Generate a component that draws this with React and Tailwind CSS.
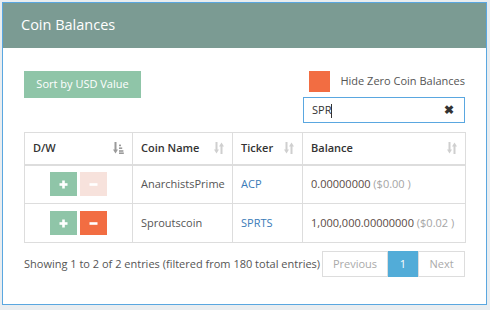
import React from "react";

const SortBoth = () => (
  <svg width="10" height="12" viewBox="0 0 10 12" fill="#cfcfcf">
    <rect x="1.5" y="0" width="2" height="8" />
    <path d="M0 7.5 L5 7.5 L2.5 11.5 Z" />
    <rect x="6.5" y="4" width="2" height="8" />
    <path d="M5 4.5 L10 4.5 L7.5 0.5 Z" />
  </svg>
);

const SortAsc = () => (
  <svg width="11" height="12" viewBox="0 0 11 12" fill="#9a9a9a">
    <rect x="1.5" y="0" width="2" height="8" />
    <path d="M0 7.5 L5 7.5 L2.5 11.5 Z" />
    <rect x="6" y="2.6" width="2" height="1.6" />
    <rect x="6" y="5.4" width="3.2" height="1.6" />
    <rect x="6" y="8.2" width="4.4" height="1.6" />
    <rect x="6" y="10.4" width="4.8" height="1.6" />
  </svg>
);

const Plus = () => (
  <svg width="9" height="9" viewBox="0 0 9 9" fill="white">
    <rect x="3.2" y="0.5" width="2.6" height="8" />
    <rect x="0.5" y="3.2" width="8" height="2.6" />
  </svg>
);
const Minus = () => (
  <svg width="9" height="9" viewBox="0 0 9 9" fill="white">
    <rect x="0.5" y="3.2" width="8" height="2.6" />
  </svg>
);

function Row({ name, ticker, bal, usd, faded }) {
  return (
    <tr className="h-[39px]">
      <td className="border border-[#dddddd] p-0">
        <div className="flex justify-center gap-[3px]">
          <div className="w-[27px] h-[24px] bg-[#8fc5a8] flex items-center justify-center"><Plus /></div>
          <div className={"w-[27px] h-[24px] flex items-center justify-center " + (faded ? "bg-[#f7e2dc]" : "bg-[#f26d42]")}><Minus /></div>
        </div>
      </td>
      <td className="border border-[#dddddd] pl-[8px] text-[#555555] whitespace-nowrap">{name}</td>
      <td className="border border-[#dddddd] pl-[8px] text-[#3a7bb8] whitespace-nowrap">{ticker}</td>
      <td className="border border-[#dddddd] pl-[8px] text-[#5a4a45] whitespace-nowrap">
        {bal} <span className="text-[#a5a5a5]">({usd} )</span>
      </td>
    </tr>
  );
}

export default function App() {
  return (
    <div className="w-[490px] h-[310px] bg-[#e9edf0] pt-[2px] pl-[2px] overflow-hidden" style={{ fontFamily: '"Open Sans", sans-serif' }}>
      <div className="w-[485px] h-[303px] border border-[#5aa7e0] bg-white">
        <div className="h-[45px] bg-[#7b9b93] flex items-center pl-[18px] text-white text-[14.5px] pb-[1px]">Coin Balances</div>
        <div className="px-[21px] pt-[23px] text-[11px] text-[#555555]">
          <div className="flex justify-between">
            <div className="w-[117px] h-[27px] bg-[#8fc5a8] text-white flex items-center justify-center">Sort by USD Value</div>
            <div className="flex flex-col items-end">
              <div className="flex items-center h-[21px]">
                <div className="w-[21px] h-[21px] bg-[#f26d42]" />
                <span className="ml-[10px]">Hide Zero Coin Balances</span>
              </div>
              <div className="mt-[5px] w-[162px] h-[26px] border border-[#5aa7e0] flex items-center pl-[8px] pr-[10px] justify-between">
                <span className="text-[#333333]">SPR<span className="inline-block w-[1px] h-[14px] bg-[#333333] align-middle ml-[0px]" /></span>
                <span className="text-[#333333] text-[12px] font-bold leading-none">✖</span>
              </div>
            </div>
          </div>
          <table className="mt-[9px] border-collapse w-[441px] table-fixed">
            <colgroup>
              <col className="w-[108px]" />
              <col className="w-[100px]" />
              <col className="w-[70px]" />
              <col className="w-[163px]" />
            </colgroup>
            <thead>
              <tr className="h-[32px]">
                <th className="border border-[#dddddd] border-b-2 text-left font-semibold text-[#333333] pl-[8px] pr-[8px]">
                  <div className="flex justify-between items-center">D/W <SortAsc /></div>
                </th>
                <th className="border border-[#dddddd] border-b-2 text-left font-semibold text-[#333333] pl-[8px] pr-[8px]">
                  <div className="flex justify-between items-center">Coin Name <SortBoth /></div>
                </th>
                <th className="border border-[#dddddd] border-b-2 text-left font-semibold text-[#333333] pl-[8px] pr-[8px]">
                  <div className="flex justify-between items-center">Ticker <SortBoth /></div>
                </th>
                <th className="border border-[#dddddd] border-b-2 text-left font-semibold text-[#333333] pl-[8px] pr-[8px]">
                  <div className="flex justify-between items-center">Balance <SortBoth /></div>
                </th>
              </tr>
            </thead>
            <tbody>
              <Row name="AnarchistsPrime" ticker="ACP" bal="0.00000000" usd="$0.00" faded />
              <Row name="Sproutscoin" ticker="SPRTS" bal="1,000,000.00000000" usd="$0.02" />
            </tbody>
          </table>
          <div className="flex justify-between items-center mt-[8px]">
            <span className="whitespace-nowrap">Showing 1 to 2 of 2 entries (filtered from 180 total entries)</span>
            <div className="flex h-[26px]">
              <div className="w-[66px] border border-[#dddddd] flex items-center justify-center text-[#aaaaaa]">Previous</div>
              <div className="w-[30px] bg-[#52acd8] flex items-center justify-center text-white">1</div>
              <div className="w-[47px] border border-[#dddddd] flex items-center justify-center text-[#aaaaaa]">Next</div>
            </div>
          </div>
        </div>
      </div>
    </div>
  );
}
